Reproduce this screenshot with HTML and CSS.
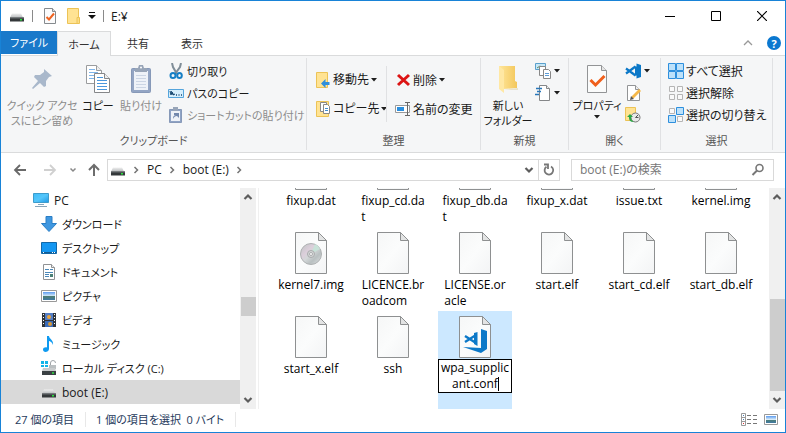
FILE: index.html
```html
<!DOCTYPE html>
<html lang="ja">
<head>
<meta charset="utf-8">
<title>E:¥</title>
<link rel="stylesheet" href="styles.css">
</head>
<body>
<svg class="defs" aria-hidden="true">
  <defs>
    <linearGradient id="g-paper" x1="0" y1="0" x2="1" y2="1"><stop offset="0" stop-color="#f6f7f7"/><stop offset=".5" stop-color="#fbfcfc"/><stop offset="1" stop-color="#f3f4f5"/></linearGradient>
    <linearGradient id="g-drive" x1="0" y1="0" x2="0" y2="1"><stop offset="0" stop-color="#f0f0f0"/><stop offset="1" stop-color="#b9bcbe"/></linearGradient>
    <linearGradient id="g-blue" x1="0" y1="0" x2="1" y2="1"><stop offset="0" stop-color="#3fbcf8"/><stop offset=".5" stop-color="#54c6fb"/><stop offset="1" stop-color="#1f98e4"/></linearGradient>
    <linearGradient id="g-folder" x1="0" y1="0" x2="1" y2="0"><stop offset="0" stop-color="#ffe69b"/><stop offset="1" stop-color="#f3c75b"/></linearGradient>
    <linearGradient id="g-sky" x1="0" y1="0" x2="0" y2="1"><stop offset="0" stop-color="#5b9bf0"/><stop offset=".5" stop-color="#d8ebf7"/><stop offset=".55" stop-color="#4d7d72"/><stop offset="1" stop-color="#3f79a5"/></linearGradient>
    <linearGradient id="g-disc" x1="0" y1="0" x2="1" y2="1"><stop offset="0" stop-color="#bfc3c4"/><stop offset=".35" stop-color="#dccfdb"/><stop offset=".5" stop-color="#d3d7d8"/><stop offset=".7" stop-color="#b9c0c1"/><stop offset="1" stop-color="#e0e3e4"/></linearGradient>
    <symbol id="drive" viewBox="0 0 16 16"><path d="M3 5.500h9l2 4H1z" fill="url(#g-drive)"/><path d="M1 9.500h14v4H1z" fill="#34383a"/><path d="M1 9.500h14v1H1z" fill="#686d70"/><rect x="11" y="11" width="2" height="1.500" fill="#27e33b"/></symbol>
    <symbol id="check-doc" viewBox="0 0 16 18"><path d="M2.500 1.500h8l3 3v12h-11z" fill="#fbfbfc" stroke="#858a8e"/><path d="M10.500 1.500v3h3" fill="#ddd" stroke="#858a8e"/><path d="M4.500 10l2.500 2.500 5-6" fill="none" stroke="#ee6321" stroke-width="2"/></symbol>
    <symbol id="folder" viewBox="0 0 16 18"><path d="M2.500 1.500h11v15h-11z" fill="#ffe393" stroke="#ecc356"/><path d="M12 10.500h2.500v6H12z" fill="#fbdc86" stroke="#ecc356"/></symbol>
    <symbol id="file" viewBox="0 0 32 42"><path d="M.5.500h23l8 8v33H.5z" fill="url(#g-paper)" stroke="#8e9091"/><path d="M23.500.500v8h8z" fill="#e3e4e4" stroke="#8e9091"/></symbol>
    <symbol id="vscode" viewBox="0 0 16 16"><path d="M11.500.500L16 2v12l-4.500 1.500z" fill="#0b78c8"/><path d="M1 5.500l9.500 7M1 10.500l9.500-7" fill="none" stroke="#0b78c8" stroke-width="2.200"/><path d="M10 3.500h2v9h-2z" fill="#0b78c8"/></symbol>
    <symbol id="tri" viewBox="0 0 6 4"><path d="M0 0h6L3 3.500z" fill="#1e1e1e"/></symbol>
    <symbol id="chev-r" viewBox="0 0 6 8"><path d="M1.500 1l3 3-3 3" fill="none" stroke="#757575" stroke-width="1.500"/></symbol>
    <symbol id="chev-u" viewBox="0 0 10 8"><path d="M1.500 6L5 2.500 8.500 6" fill="none" stroke="#5d5d5d" stroke-width="2.200"/></symbol>
    <symbol id="chev-d" viewBox="0 0 10 8"><path d="M1.500 2L5 5.500 8.500 2" fill="none" stroke="#5d5d5d" stroke-width="2.200"/></symbol>
  </defs>
</svg>
<div class="window">
  <header class="titlebar">
    <svg class="i16 t-drive"><use href="#drive"/></svg><span class="tsep"></span>
    <button class="plain" aria-label="プロパティ"><svg class="i18"><use href="#check-doc"/></svg></button>
    <button class="plain" aria-label="新しいフォルダー"><svg class="i18"><use href="#folder"/></svg></button>
    <button class="plain" aria-label="カスタマイズ"><svg class="i8" viewBox="0 0 8 8"><path d="M1 .500h6" stroke="#111"/><path d="M0 3h8L4 7z" fill="#111"/></svg></button>
    <span class="tsep"></span><h1>E:¥</h1>
    <div class="winctl">
      <button class="plain" aria-label="最小化"><svg class="i10" viewBox="0 0 10 10"><path d="M0 5.500h10" stroke="#000"/></svg></button>
      <button class="plain" aria-label="最大化"><svg class="i10" viewBox="0 0 10 10"><path d="M.5.500h9v9h-9z" fill="none" stroke="#000"/></svg></button>
      <button class="plain" aria-label="閉じる"><svg class="i10" viewBox="0 0 10 10"><path d="M0 0l10 10M10 0L0 10" stroke="#000" stroke-width="1.200"/></svg></button>
    </div>
  </header>
  <nav class="tabs">
    <button class="tab file-tab">ファイル</button><button class="tab active">ホーム</button><button class="tab">共有</button><button class="tab">表示</button>
    <span class="tabs-end">
      <button class="plain" aria-label="リボンの最小化"><svg class="i10" viewBox="0 0 10 10"><path d="M1 7l4-4 4 4" fill="none" stroke="#999" stroke-width="1.300"/></svg></button>
      <button class="plain help" aria-label="ヘルプ">?</button>
    </span>
  </nav>
  <section class="ribbon">
    <div class="group">
      <div class="tools clip">
        <button class="big off pin"><svg class="i28" viewBox="0 0 28 28"><path d="M16 4l8 7-3 1-3 4v5l-2 1-4-4-7 6-1-1 6-7-4-4 1-2h5l4-3z" fill="#a9b8cb"/></svg><span>クイック アクセ<br>スにピン留め</span></button>
        <button class="big"><svg class="i28" viewBox="0 0 28 28"><path d="M2.500.500h10l5 5v13h-15z" fill="#fff" stroke="#9a9c9e"/><path d="M12.500.500v5h5" fill="#eee" stroke="#9a9c9e"/><path d="M5 4.500h6M5 7.500h9M5 10.500h9M5 13.500h5" stroke="#7fb5ea"/><path d="M10.500 8.500h10l5 5v14h-15z" fill="#fff" stroke="#858789"/><path d="M20.500 8.500v5h5" fill="#eee" stroke="#858789"/><path d="M13 12.500h6M13 15.500h10M13 18.500h10M13 21.500h10M13 24.500h10" stroke="#4a97dd"/></svg><span>コピー</span></button>
        <button class="big off"><svg class="i28" viewBox="0 0 28 28"><rect x="4.500" y="3.500" width="19" height="24" rx="1" fill="#93a5c4" stroke="#8799b8"/><path d="M7 6h14v19H7z" fill="#eef2f8"/><path d="M9 10.500h10M9 13.500h10M9 16.500h10M9 19.500h10M9 22.500h10" stroke="#cbd5e4"/><path d="M8 3h3l1-3h4l1 3h3v4H8z" fill="#98a5b8"/><circle cx="14" cy="2.500" r="1" fill="#fff"/></svg><span>貼り付け</span></button>
        <div class="rows">
          <button class="row"><svg class="i16" viewBox="0 0 16 16"><path d="M4 0l1 4 4 7M13 0l-1 4-5 7" fill="none" stroke="#7f8d98" stroke-width="2"/><ellipse cx="5" cy="12.500" rx="2.500" ry="2.500" fill="none" stroke="#167fc5" stroke-width="2"/><ellipse cx="11.500" cy="12.500" rx="2.300" ry="2.500" fill="none" stroke="#167fc5" stroke-width="2"/></svg>切り取り</button>
          <button class="row"><svg class="i16" viewBox="0 0 16 16"><path d="M.5 4.500h15v8H.5z" fill="#d5eefc" stroke="#55a5dc"/><path d="M2 6l1 4 1-3 1 3 2-1M3 6l3 4" fill="none" stroke="#15466f"/><path d="M8 10h1M10.500 10h1M13 10h1" stroke="#15466f" stroke-width="1.500"/></svg>パスのコピー</button>
          <button class="row off"><svg class="i16" viewBox="0 0 16 16"><path d="M1.500 2.500h12v13h-12z" fill="#8fa3c5" stroke="#8799b8"/><path d="M3 4h9v10H3z" fill="#eef2f8"/><path d="M5 0h5v4H5z" fill="#98a5b8"/><path d="M5 12c0-3 1-4 3-4H6V6h5v5L9 9c-2 0-3 1-4 3z" fill="#7288ad"/></svg>ショートカットの貼り付け</button>
        </div>
      </div>
      <h2>クリップボード</h2>
    </div>
    <div class="group">
      <div class="tools organize">
        <div class="rows wide">
          <button class="row"><svg class="i16" viewBox="0 0 16 16"><path d="M1.500.500h11v15h-11z" fill="#ffe393" stroke="#ecc356"/><path d="M14.500 10v3h-4v3L6 11.500 10.500 7v3z" fill="#2f8fdb"/></svg>移動先<svg class="tri"><use href="#tri"/></svg></button>
          <button class="row"><svg class="i16" viewBox="0 0 16 16"><path d="M1.500.500h12v15h-12z" fill="#ffe393" stroke="#ecc356"/><path d="M5.500 1.500h6v9h-6z" fill="#fff" stroke="#888"/><path d="M8.500 3.500h4l2 2v7h-6z" fill="#fff" stroke="#888"/><path d="M10 7.500h3M10 9.500h3" stroke="#438ed0"/></svg>コピー先<svg class="tri"><use href="#tri"/></svg></button>
        </div>
        <div class="rows wide sep-left">
          <button class="row"><svg class="i16" viewBox="0 0 16 16"><path d="M3 3l11 10M14 3L3 13" stroke="#dc1414" stroke-width="3"/></svg>削除<svg class="tri"><use href="#tri"/></svg></button>
          <button class="row"><svg class="i16" viewBox="0 0 16 16"><path d="M.5 4.500h14v7H.5z" fill="#fff" stroke="#999"/><path d="M2 6h7v4H2z" fill="#2b8fdf"/><path d="M10 1.500h5M10 14.500h5M12.500 1.500v13" stroke="#666"/></svg>名前の変更</button>
        </div>
      </div>
      <h2>整理</h2>
    </div>
    <div class="group">
      <div class="tools create">
        <button class="big"><svg class="i28" viewBox="0 0 28 28"><path d="M5 1h16v15l2 1v6l-14 1z" fill="url(#g-folder)"/><path d="M5 1l5 4v23l-5-4z" fill="#ffe8a4"/><path d="M10 25h14v-2z" fill="#e8e2cc"/></svg><span>新しい<br>フォルダー</span></button>
        <div class="rows">
          <button class="row" aria-label="新しいアイテム"><svg class="i16" viewBox="0 0 16 16"><path d="M.5.500h10v6H.5z" fill="#c8e8f8" stroke="#5aa0cc"/><path d="M2 5l3-2 4 3" stroke="#568a65" fill="none"/><path d="M4.500 3.500h6v9h-6z" fill="#fff" stroke="#888"/><path d="M8.500 6.500h5l2 2v7h-7z" fill="#fff" stroke="#888"/><path d="M10 10.500h4M10 12.500h4" stroke="#5b9bd5"/></svg><svg class="tri"><use href="#tri"/></svg></button>
          <button class="row" aria-label="ショートカット"><svg class="i16" viewBox="0 0 16 16"><path d="M4.500.500h7l3 3v12h-10z" fill="#fff" stroke="#858789"/><path d="M11.500.500v3h3" fill="#eee" stroke="#858789"/><path d="M1 3.500h6M2 6.500h4M0 9.500h4" stroke="#2776b9" stroke-width="1.500"/></svg><svg class="tri"><use href="#tri"/></svg></button>
        </div>
      </div>
      <h2>新規</h2>
    </div>
    <div class="group">
      <div class="tools open">
        <button class="big"><svg class="i28" viewBox="0 0 28 28"><path d="M4.500.500h14l5 5v22h-19z" fill="#fafbfb" stroke="#929496"/><path d="M18.500.500v5h5" fill="#e5e5e5" stroke="#929496"/><path d="M7.500 15l5 5 9-9" fill="none" stroke="#f0601c" stroke-width="3"/></svg><span>プロパティ</span><svg class="tri"><use href="#tri"/></svg></button>
        <div class="rows">
          <button class="row" aria-label="Visual Studio Code で開く"><svg class="i16"><use href="#vscode"/></svg><svg class="tri"><use href="#tri"/></svg></button>
          <button class="row" aria-label="編集"><svg class="i16" viewBox="0 0 16 16"><path d="M2.500.500h8l4 4v11h-12z" fill="#fff" stroke="#929496"/><path d="M10.500.500v4h4" fill="#eee" stroke="#929496"/><path d="M6 14l1-3 7-7 2 2-7 7z" fill="#f5b84a"/><path d="M5 15l1-4 3 3z" fill="#555"/></svg></button>
          <button class="row" aria-label="履歴"><svg class="i16" viewBox="0 0 16 16"><path d="M.5.500h10v13H.5z" fill="#ffe393" stroke="#ecc356"/><circle cx="10.500" cy="10.500" r="4.500" fill="#e8e8e8" stroke="#777"/><path d="M10.500 10.500L13 8M10.500 10.500h3" fill="none" stroke="#555"/><path d="M2 10l3-3 3 3H6c0 3 1 4 3 5-4 0-5-2-5-5z" fill="#27a844"/></svg></button>
        </div>
      </div>
      <h2>開く</h2>
    </div>
    <div class="group">
      <div class="tools select">
        <div class="rows">
          <button class="row"><svg class="i16" viewBox="0 0 16 16"><path d="M.5.500h7v7h-7zM8.500.500h7v7h-7zM.5 8.500h7v7h-7zM8.500 8.500h7v7h-7z" fill="#bce1fa" stroke="#2d8fdd"/></svg>すべて選択</button>
          <button class="row"><svg class="i16" viewBox="0 0 16 16"><path d="M1.500 1.500h5v5h-5zM9.500 1.500h5v5h-5zM1.500 9.500h5v5h-5zM9.500 9.500h5v5h-5z" fill="#fafafa" stroke="#b5b5b5"/></svg>選択解除</button>
          <button class="row"><svg class="i16" viewBox="0 0 16 16"><path d="M1.500 1.500h5v5h-5zM9.500 9.500h5v5h-5z" fill="#fafafa" stroke="#b5b5b5"/><path d="M8.500.500h7v7h-7zM.5 8.500h7v7h-7z" fill="#bce1fa" stroke="#2d8fdd"/></svg>選択の切り替え</button>
        </div>
      </div>
      <h2>選択</h2>
    </div>
  </section>
  <div class="address">
    <button class="plain" aria-label="戻る"><svg class="i14" viewBox="0 0 14 14"><path d="M13 7H2M7 2L2 7l5 5" fill="none" stroke="#696969" stroke-width="1.800"/></svg></button>
    <button class="plain" aria-label="進む" disabled><svg class="i14" viewBox="0 0 14 14"><path d="M1 7h11M7 2l5 5-5 5" fill="none" stroke="#d0d0d0" stroke-width="1.800"/></svg></button>
    <button class="plain" aria-label="最近表示した場所"><svg class="i8" viewBox="0 0 8 8"><path d="M1.500 2.500L4 5l2.500-2.500" fill="none" stroke="#888" stroke-width="1.500"/></svg></button>
    <button class="plain" aria-label="上へ"><svg class="i14" viewBox="0 0 14 14"><path d="M7 13V2M2 7l5-5 5 5" fill="none" stroke="#6d6d6d" stroke-width="2"/></svg></button>
    <div class="path">
      <svg class="i16"><use href="#drive"/></svg><svg class="sepchev"><use href="#chev-r"/></svg>
      <a href="#">PC</a><svg class="sepchev"><use href="#chev-r"/></svg>
      <a href="#">boot (E:)</a><svg class="sepchev"><use href="#chev-r"/></svg>
      <button class="plain drop" aria-label="履歴一覧"><svg class="chev"><use href="#chev-d"/></svg></button>
      <button class="plain refresh" aria-label="更新"><svg class="i14" viewBox="0 0 14 14"><path d="M9 3.500a4.300 4.300 0 1 1-4.500.200" fill="none" stroke="#777" stroke-width="1.800"/><path d="M2 1.500h4v4.500" fill="none" stroke="#777" stroke-width="1.800"/></svg></button>
    </div>
    <label class="search"><input type="text" placeholder="boot (E:)の検索" aria-label="boot (E:)の検索"><svg class="i14" viewBox="0 0 14 14"><circle cx="8.500" cy="5" r="3.500" fill="none" stroke="#777" stroke-width="1.600"/><path d="M6 7.500L1.500 12" stroke="#777" stroke-width="2"/></svg></label>
  </div>
  <main class="content">
    <ul class="tree">
      <li class="root"><svg class="i16" viewBox="0 0 16 16"><path d="M.5 1.500h15v9H.5z" fill="url(#g-blue)" stroke="#3d9ccc"/><path d="M5 12.500h6M2 14.500h12" stroke="#88a6ba"/></svg>PC</li>
      <li><svg class="i16" viewBox="0 0 16 16"><path d="M5 .500h6v7h4.500L8 15.500.500 7.500H5z" fill="#3f97e0" stroke="#2a7ec5"/></svg>ダウンロード</li>
      <li><svg class="i16" viewBox="0 0 16 16"><path d="M.5 2.500h15v11H.5z" fill="#1497f2" stroke="#1268a8"/><path d="M1 12.500h14" stroke="#125b93"/><path d="M2 12.500h1M11 12.500h1M13 12.500h1" stroke="#fff"/></svg>デスクトップ</li>
      <li><svg class="i16" viewBox="0 0 16 16"><path d="M2.500.500h8l3 3v12h-11z" fill="#fff" stroke="#909294"/><path d="M10.500.500v3h3" fill="#eee" stroke="#909294"/><path d="M4 5.500h4M4 8.500h8M4 10.500h4M4 12.500h4M9 5.500h3" stroke="#4b88b8"/><path d="M9 10h3v3H9z" fill="#4a8075"/></svg>ドキュメント</li>
      <li><svg class="i16" viewBox="0 0 16 16"><path d="M.5 2.500h15v11H.5z" fill="#fff" stroke="#999"/><path d="M2 4h12v8H2z" fill="url(#g-sky)"/></svg>ピクチャ</li>
      <li><svg class="i16" viewBox="0 0 16 16"><path d="M1 1h14v14H1z" fill="#303438"/><path d="M4 1h8v7H4z" fill="#547ec5"/><path d="M4 9h8v6H4z" fill="#396bb9"/><circle cx="8" cy="5" r="2" fill="#efa638"/><circle cx="9" cy="12" r="2" fill="#d99833"/><path d="M2.500 2v12M13.500 2v12" stroke="#fff" stroke-dasharray="1 2"/></svg>ビデオ</li>
      <li><svg class="i16" viewBox="0 0 16 16"><path d="M6 0h2c0 3 5 4 4 9-1-3-3-4-4-4v8c0 2-2 3-3.500 3S2 15 2 13.500 4 11 6 11.500z" fill="#0f9af0"/></svg>ミュージック</li>
      <li><svg class="i16" viewBox="0 0 16 16"><path d="M0 1h3v3H0zM4 1h3v3H4zM0 5h3v2H0zM4 5h3v2H4z" fill="#12b5e9"/><path d="M9.500 5V3a2.500 2.500 0 0 1 5 0" fill="none" stroke="#a0a5a8"/><path d="M8 5h7v4H8z" fill="#babfc1"/><path d="M2 8h12l1 3H1z" fill="#c9cccd"/><path d="M1 11h14v4H1z" fill="#3a4043"/><path d="M11 13h2" stroke="#2fe042" stroke-width="1.500"/></svg>ローカル ディスク (C:)</li>
      <li class="selected"><svg class="i16"><use href="#drive"/></svg>boot (E:)</li>
    </ul>
    <div class="scroll left"><svg class="chev"><use href="#chev-u"/></svg><span class="thumb"></span><svg class="chev"><use href="#chev-d"/></svg></div>
    <div class="files">
      <div class="item"><svg class="doc"><use href="#file"/></svg><span>fixup.dat</span></div>
      <div class="item"><svg class="doc"><use href="#file"/></svg><span>fixup_cd.da<br>t</span></div>
      <div class="item"><svg class="doc"><use href="#file"/></svg><span>fixup_db.da<br>t</span></div>
      <div class="item"><svg class="doc"><use href="#file"/></svg><span>fixup_x.dat</span></div>
      <div class="item"><svg class="doc"><use href="#file"/></svg><span>issue.txt</span></div>
      <div class="item"><svg class="doc"><use href="#file"/></svg><span>kernel.img</span></div>
      <div class="item"><svg class="doc" viewBox="0 0 32 42"><use href="#file" width="32" height="42"/><circle cx="16" cy="22" r="10.500" fill="url(#g-disc)" stroke="#aeb1b2"/><path d="M16 22l4-10a10 10 0 0 1 5 5z" fill="#c8e2d8"/><circle cx="16" cy="22" r="3.500" fill="#d5d7d8" stroke="#a9abac"/><circle cx="16" cy="22" r="1.500" fill="#fff" stroke="#a9abac"/></svg><span>kernel7.img</span></div>
      <div class="item"><svg class="doc"><use href="#file"/></svg><span>LICENCE.br<br>oadcom</span></div>
      <div class="item"><svg class="doc"><use href="#file"/></svg><span>LICENSE.or<br>acle</span></div>
      <div class="item"><svg class="doc"><use href="#file"/></svg><span>start.elf</span></div>
      <div class="item"><svg class="doc"><use href="#file"/></svg><span>start_cd.elf</span></div>
      <div class="item"><svg class="doc"><use href="#file"/></svg><span>start_db.elf</span></div>
      <div class="item"><svg class="doc"><use href="#file"/></svg><span>start_x.elf</span></div>
      <div class="item"><svg class="doc"><use href="#file"/></svg><span>ssh</span></div>
      <div class="item picked"><svg class="doc" viewBox="0 0 32 42"><use href="#file" width="32" height="42"/><path d="M22 13l6 2v18l-6 4-18-6 18 1z" fill="#0b78c8"/><path d="M6 20l11 7M6 26l11-7" fill="none" stroke="#0b78c8" stroke-width="2.400"/><path d="M15 17l3.500-1v14L15 28z" fill="#0b78c8"/></svg>
        <div class="rename"><textarea rows="2" aria-label="ファイル名" spellcheck="false">wpa_supplic
ant.conf</textarea><span class="caret"></span></div></div>
    </div>
    <div class="scroll right"><svg class="chev"><use href="#chev-u"/></svg><span class="thumb"></span><svg class="chev"><use href="#chev-d"/></svg></div>
  </main>
  <footer class="status">
    <span>27 個の項目</span><span>1 個の項目を選択&ensp;0 バイト</span>
    <div class="views">
      <button class="plain" aria-label="詳細"><svg class="i16" viewBox="0 0 16 14"><path d="M.5.500h4v12h-4zM.5 4.500h4M.5 8.500h4" fill="#fff" stroke="#999"/><path d="M6 2.500h4M12 2.500h4M6 6.500h4M12 6.500h4M6 10.500h4M12 10.500h4" stroke="#777"/><path d="M2 2.500h1M2 6.500h1" stroke="#4b7fb5"/><path d="M2 10.500h1" stroke="#d33"/></svg></button>
      <button class="plain" aria-label="大アイコン"><svg class="i16" viewBox="0 0 16 14"><path d="M1.500 1.500h13v10h-13z" fill="#fff" stroke="#999"/><path d="M3 3h10v7H3z" fill="url(#g-sky)"/></svg></button>
    </div>
  </footer>
</div>
</body>
</html>
```
FILE: styles.css
```css
* { box-sizing: border-box; }
html, body { height: 100%; }
body {
  margin: 0;
  font: 12px/15px "Open Sans", "Noto Sans CJK JP", sans-serif;
  font-feature-settings: "palt";
  color: #1a1a1a;
}
button, input, textarea { font: inherit; font-feature-settings: inherit; color: inherit; }
button { border: 0; padding: 0; background: none; white-space: nowrap; }
svg { flex: none; display: block; }
.defs { position: absolute; width: 0; height: 0; }
.plain { display: flex; align-items: center; justify-content: center; }
.i8 { width: 8px; height: 8px; }
.i10 { width: 10px; height: 10px; }
.i14 { width: 14px; height: 14px; }
.i16 { width: 16px; height: 16px; }
.i18 { width: 16px; height: 18px; }
.i28 { width: 28px; height: 28px; }
.tri { width: 6px; height: 4px; }
.chev { width: 10px; height: 8px; }
.sepchev { width: 6px; height: 8px; }

.window { min-height: 100%; height: 100vh; border: 1px solid #1883d7; display: flex; flex-direction: column; background: #fff; }

.titlebar { flex: none; height: 30px; display: flex; align-items: center; gap: 7px; padding-left: 8px; }
.titlebar h1 { margin: 0; font-size: 12px; font-weight: 400; }
.tsep { width: 1px; height: 12px; background: #8a8a8a; }
.tsep + .plain { margin-left: 2px; }
.winctl { margin-left: auto; display: flex; align-self: stretch; }
.winctl .plain { width: 46px; }

.tabs { flex: none; height: 25px; display: flex; border-bottom: 1px solid #dadbdc; }
.tab { width: 54px; height: 24px; font-size: 11px; color: #333; }
.file-tab { width: 56px; height: 23px; background: #1979ca; color: #fff; }
.tab.active { height: 25px; background: #f5f6f7; border: 1px solid #dadbdc; border-bottom: 0; }
.tabs-end { margin-left: auto; display: flex; align-items: center; gap: 14px; padding-right: 4px; }
.help { width: 14px; height: 14px; border-radius: 50%; background: #0b78d0; color: #fff; font-size: 11px; font-weight: 700; }

.ribbon {
  flex: none; height: 97px; display: grid; grid-template-columns: 306px 174px 88px 92px 112px;
  background: #f5f6f7; border-bottom: 1px solid #dadbdc; padding: 2px 0; font-size: 11px;
}
.group { border-right: 1px solid #e0e1e3; display: flex; flex-direction: column; justify-content: space-between; min-width: 0; }
.group h2 { margin: 0; font-size: 11px; line-height: 18px; font-weight: 400; text-align: center; color: #555; }
.tools { display: grid; height: 73px; }
.clip { grid-template-columns: 78px 34px 52px 1fr; padding-left: 2px; }
.organize { grid-template-columns: 79px 1fr; }
.create { grid-template-columns: 54px 1fr; }
.open { grid-template-columns: 56px 1fr; }
.big { display: flex; flex-direction: column; align-items: center; padding-top: 7px; gap: 5px; }
.big .tri { margin-top: -3px; }
.off { color: #8d8d8d; }
.rows { display: grid; grid-auto-rows: 22px; padding-top: 2px; }
.clip .rows { padding-left: 1px; }
.row { display: flex; align-items: center; gap: 3px; }
.wide { grid-auto-rows: 29px; padding-top: 7px; }
.wide.sep-left { padding-left: 8px; margin-top: 8px; padding-top: 0; height: 56px; border-left: 1px solid #e0e1e3; }
.wide.sep-left .row { margin-top: -1px; }
.organize .rows { margin-left: 8px; }
.organize .sep-left { margin-left: 0; }
.select { padding-left: 7px; }
.organize, .select .row { font-size: 12px; }
.select .row, .wide .row { gap: 2px; }

.address { flex: none; height: 35px; display: flex; align-items: center; padding: 0 11px 2px 12px; }
.address > .plain:nth-child(2) { margin-left: 16px; }
.address > .plain:nth-child(3) { margin-left: 12px; }
.address > .plain:nth-child(4) { margin-left: 10px; }
.path { flex: 1; height: 22px; margin-left: 6px; display: flex; align-items: center; gap: 8px; border: 1px solid #d9d9d9; padding-left: 2px; }
.path a { color: inherit; text-decoration: none; }
.path .sepchev { margin-left: -1px; }
.drop { margin-left: auto; }
.refresh { width: 21px; height: 20px; border-left: 1px solid #d9d9d9; margin-left: -4px; }
.search { flex: 0 0 203px; height: 22px; margin-left: 11px; display: flex; align-items: center; border: 1px solid #d9d9d9; padding: 0 8px; }
.search input { flex: 1; min-width: 0; border: 0; padding: 0; outline: 0; background: none; }
.search input::placeholder { color: #767676; opacity: 1; }

.content { flex: 1; min-height: 0; display: flex; }
.tree { list-style: none; margin: 0; padding: 0; flex: 0 0 239px; font-size: 11px; overflow: hidden; }
.tree li { height: 24px; display: flex; align-items: center; gap: 5px; padding-left: 40px; }
.tree .root { padding-left: 32px; font-size: 12px; }
.tree .selected { background: #d9d9d9; font-size: 12px; }
.scroll { flex: none; width: 16px; background: #f0f0f0; display: flex; flex-direction: column; align-items: center; padding: 5px 0; }
.thumb { width: 15px; background: #cdcdcd; }
.left .thumb { height: 19px; margin: 96px 0 auto; }
.right .thumb { height: 92px; margin: auto 0 5px; }

.files {
  flex: 1; min-width: 0; overflow: hidden; margin-left: 2px; border-left: 1px solid #f0f0f0; padding-left: 15px;
  display: grid; grid-template-columns: repeat(auto-fill, 74px); column-gap: 8px;
  grid-template-rows: 84px 84px 98px; align-content: end;
  line-height: 16px;
}
.item { display: flex; flex-direction: column; align-items: center; gap: 3px; padding-top: 5px; color: #000; }
.doc { width: 32px; height: 42px; }
.picked { background: #cce8ff; gap: 1px; }
.rename { position: relative; width: 74px; height: 34px; border: 1px solid #000; background: #fff; }
.rename textarea { display: block; width: 100%; height: 32px; padding: 0; border: 0; outline: 0; resize: none; overflow: hidden; text-align: center; background: none; }
.caret { position: absolute; right: 12px; bottom: 1px; width: 1px; height: 14px; background: #000; }

.status { flex: none; height: 23px; display: flex; align-items: center; padding: 0 6px 2px 14px; color: #1e395b; font-size: 11px; }
.status > span { padding-right: 11px; margin-right: 10px; border-right: 1px solid #e8e8e8; }
.views { margin-left: auto; display: flex; gap: 6px; }
.views svg { height: 14px; }
```
